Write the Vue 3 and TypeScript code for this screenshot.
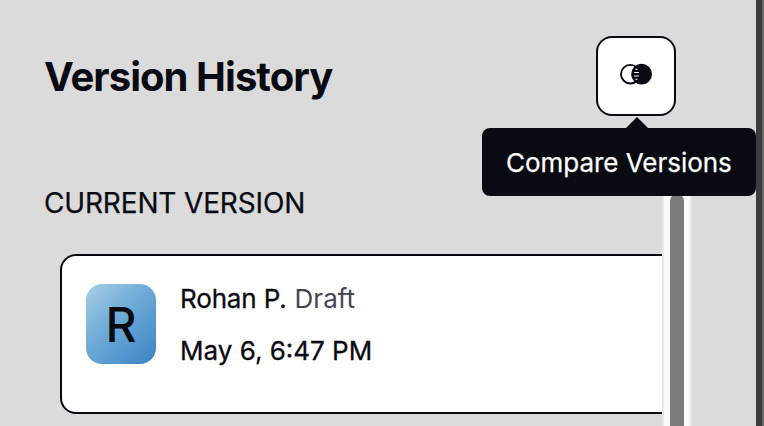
<script setup lang="ts">
interface Version {
  author: string
  status: string
  date: string
}

const current: Version = { author: 'Rohan P.', status: 'Draft', date: 'May 6, 6:47 PM' }
</script>

<template>
  <div class="shell">
    <section class="panel">
      <header class="header">
        <h1 class="title">Version History</h1>
        <div class="compare">
          <button class="compare-btn" type="button" aria-label="Compare Versions">
            <svg width="34" height="22" viewBox="0 0 34 22">
              <circle cx="11.3" cy="11.2" r="9.3" fill="#fff" stroke="#0a0a12" stroke-width="1.9" />
              <circle cx="22.6" cy="11.2" r="10.4" fill="#0a0a12" />
              <path d="M16.4 6.4h2M15.2 9.5h4.6M15.2 13h4.6M16.4 16.2h2" stroke="#fff" stroke-width="1.1" />
            </svg>
          </button>
          <div class="tooltip" role="tooltip">Compare Versions</div>
        </div>
      </header>
      <div class="body">
        <div class="list">
          <h2 class="label">CURRENT VERSION</h2>
          <article class="card">
            <div class="avatar">{{ current.author[0] }}</div>
            <div class="info">
              <p class="line"><span class="name">{{ current.author }}</span><span class="status">{{ current.status }}</span></p>
              <p class="line">{{ current.date }}</p>
            </div>
          </article>
        </div>
        <div class="track"><div class="thumb"></div></div>
      </div>
    </section>
    <div class="edge"></div>
  </div>
</template>

<style>
body {
  margin: 0;
  overflow: hidden;
}
</style>

<style scoped>
.shell {
  display: flex;
  width: 764px;
  height: 426px;
  overflow: hidden;
  background: #dbdbdb;
  color: #0a0a12;
  font-family: Inter, sans-serif;
}
.shell * {
  box-sizing: border-box;
}
.panel {
  display: flex;
  flex-direction: column;
  width: 756px;
  flex: none;
}
.edge {
  width: 8px;
  background: #3d3d3d;
  border-right: 2px solid #666;
}
.header {
  display: flex;
  justify-content: space-between;
  align-items: center;
  height: 80px;
  margin: 36px 80px 64px 44px;
}
.title {
  margin: 0;
  padding-top: 2px;
  font-size: 40px;
  line-height: 48px;
  font-weight: 700;
  letter-spacing: -0.95px;
}
.compare {
  position: relative;
}
.compare-btn {
  display: flex;
  align-items: center;
  justify-content: center;
  width: 80px;
  height: 80px;
  padding: 0 0 4px;
  border: 2px solid #0a0a12;
  border-radius: 16px;
  background: #fff;
}
.tooltip {
  position: absolute;
  z-index: 2;
  top: 92px;
  right: -80px;
  width: 274px;
  height: 68px;
  padding-left: 24px;
  border-radius: 8px;
  background: #0a0a12;
  color: #fff;
  font-size: 26px;
  line-height: 70px;
  letter-spacing: -0.03px;
  -webkit-text-stroke: 0.25px currentColor;
  white-space: nowrap;
}
.tooltip::before {
  content: '';
  position: absolute;
  left: 143px;
  top: -11px;
  border: 12px solid transparent;
  border-top: 0;
  border-bottom-color: #0a0a12;
}
.body {
  display: flex;
  height: 246px;
}
.list {
  width: 662px;
  overflow: hidden;
}
.label {
  margin: 6px 0 34px 44px;
  font-size: 28px;
  line-height: 34px;
  font-weight: 400;
  letter-spacing: -0.15px;
  -webkit-text-stroke: 0.25px currentColor;
}
.card {
  display: flex;
  gap: 24px;
  width: 640px;
  height: 160px;
  margin-left: 60px;
  padding: 28px 24px;
  border: 2px solid #0a0a12;
  border-radius: 16px;
  background: #fff;
}
.avatar {
  flex: none;
  width: 70px;
  height: 80px;
  border-radius: 16px;
  background: linear-gradient(135deg, #a9cfe7 0%, #72aed8 40%, #3b82c4 100%);
  font-size: 48px;
  font-weight: 500;
  line-height: 82px;
  text-align: center;
}
.info {
  display: flex;
  flex-direction: column;
  gap: 20px;
  margin-top: -1px;
}
.line {
  margin: 0;
  font-size: 26px;
  line-height: 32px;
  -webkit-text-stroke: 0.3px currentColor;
}
.name {
  letter-spacing: -0.15px;
}
.status {
  margin-left: 8px;
  color: #454552;
  -webkit-text-stroke-width: 0;
}
.track {
  width: 30px;
  padding: 14px 6px 0;
  border: solid #e8e8e8;
  border-width: 0 2px;
  background: #fafafa;
}
.thumb {
  height: 300px;
  border-radius: 7px;
  background: #7b7b7b;
}
</style>
